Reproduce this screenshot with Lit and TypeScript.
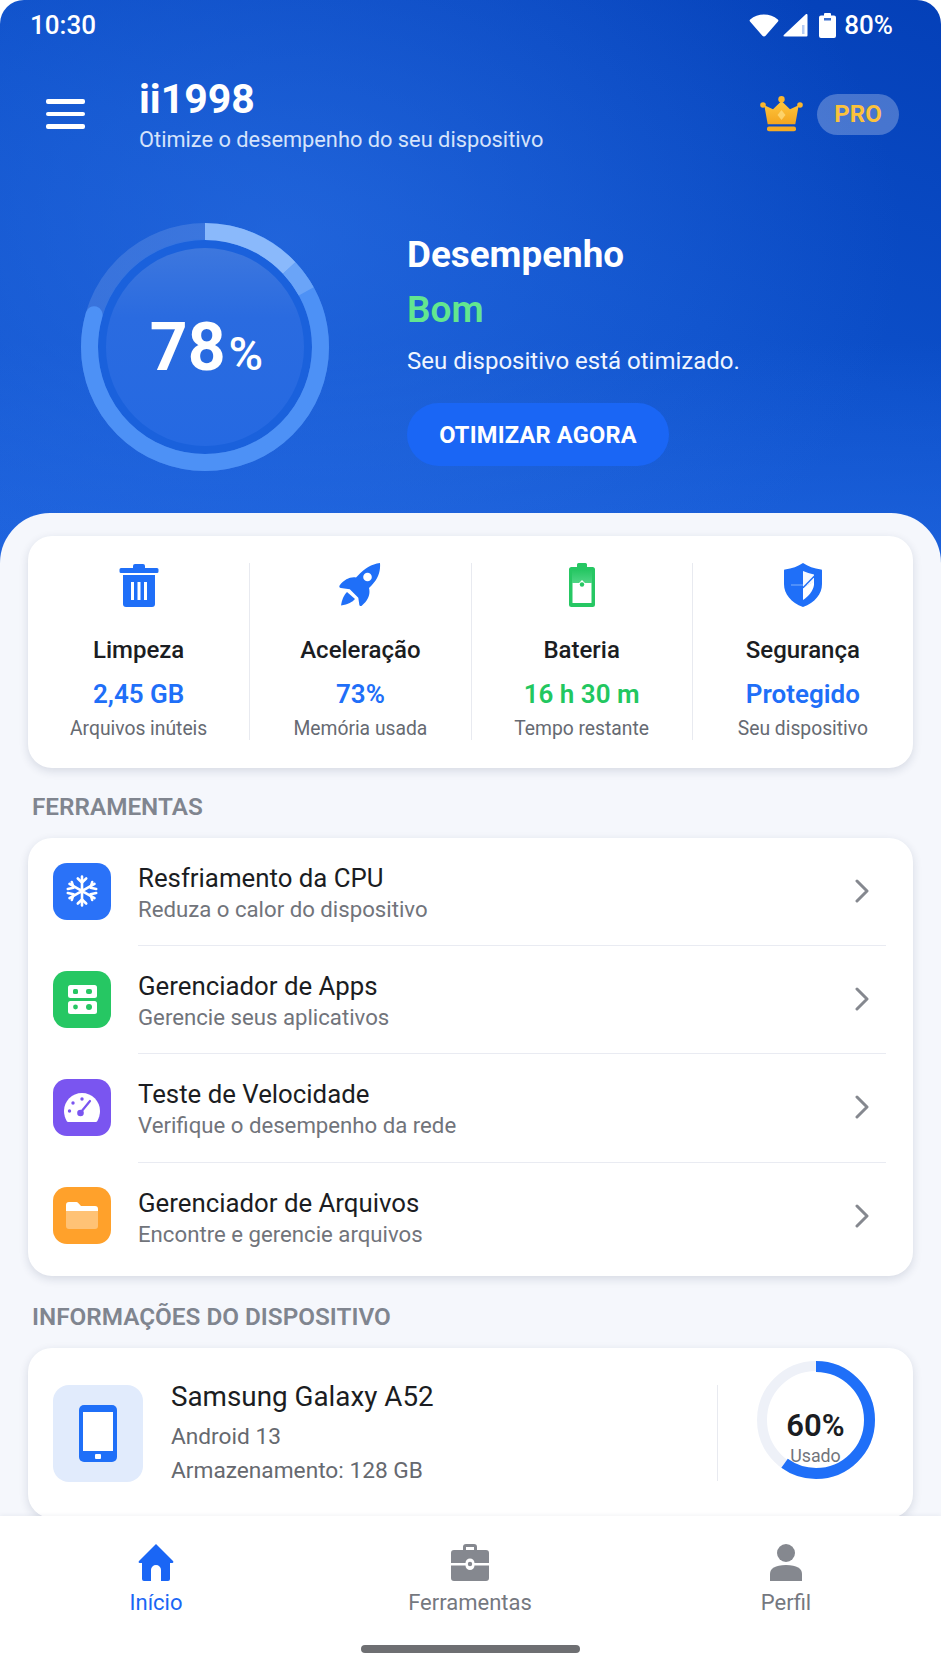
import { LitElement, css, html, svg } from "lit";
import { customElement } from "lit/decorators.js";

const stats = [
  { icon: "trash", label: "Limpeza", value: "2,45 GB", sub: "Arquivos inúteis", color: "blue" },
  { icon: "rocket", label: "Aceleração", value: "73%", sub: "Memória usada", color: "blue" },
  { icon: "battery", label: "Bateria", value: "16 h 30 m", sub: "Tempo restante", color: "green" },
  { icon: "shield", label: "Segurança", value: "Protegido", sub: "Seu dispositivo", color: "blue" },
];

const tools = [
  { icon: "snow", bg: "#2a72f8", title: "Resfriamento da CPU", sub: "Reduza o calor do dispositivo" },
  { icon: "apps", bg: "#26c763", title: "Gerenciador de Apps", sub: "Gerencie seus aplicativos" },
  { icon: "gauge", bg: "#7a55f0", title: "Teste de Velocidade", sub: "Verifique o desempenho da rede" },
  { icon: "folder", bg: "#ffa12b", title: "Gerenciador de Arquivos", sub: "Encontre e gerencie arquivos" },
];

const icons: Record<string, unknown> = {
  trash: html`<svg width="40" height="44" viewBox="0 0 40 44">
    <path fill="#1f6ff8" d="M14 3a2 2 0 0 1 2-2h8a2 2 0 0 1 2 2v2h12a1.500 1.500 0 0 1 1.500 1.500v2A1.500 1.500 0 0 1 38 10H2a1.500 1.500 0 0 1-1.500-1.500v-2A1.500 1.500 0 0 1 2 5h12z" />
    <path fill="#1f6ff8" d="M4 12h32v29a3 3 0 0 1-3 3H7a3 3 0 0 1-3-3z" />
    <path fill="#fff" d="M12 19h3v18h-3zM18.500 19h3v18h-3zM25 19h3v18h-3z" />
  </svg>`,
  rocket: html`<svg width="42" height="44" viewBox="0 0 42 44">
    <path fill="#1f6ff8" d="M41 0c.6 8-1.500 15.500-8.500 22.500l-2.500 2.500c1.500 6-.5 12-7 17.500-1 .9-2.500.6-2.700-.8l-1-7-8.500-8.500-9-1.200c-1.500-.2-1.900-1.700-1-2.800C5.500 16.500 11 13.600 17 14.500l2-2C25.500 5.500 32.500 1 41 0z" />
    <circle cx="28.500" cy="14" r="4.300" fill="#fff" />
    <path fill="#1f6ff8" d="M8 29l8 7c-2.500 3-7 5.500-14 6.500C3 36 5 32 8 29z" />
  </svg>`,
  battery: html`<svg width="26" height="44" viewBox="0 0 26 44">
    <defs><linearGradient id="bt" x1="0" y1="0" x2="0" y2="1"><stop offset="0" stop-color="#26c763" /><stop offset="1" stop-color="#4fd585" /></linearGradient></defs>
    <path fill="#26c763" d="M8 1.500a1.500 1.500 0 0 1 1.500-1.500h7A1.500 1.500 0 0 1 18 1.500V4h5.500A2.500 2.500 0 0 1 26 6.500v35a2.500 2.500 0 0 1-2.500 2.500h-21A2.500 2.500 0 0 1 0 41.500v-35A2.500 2.500 0 0 1 2.500 4H8z" />
    <path fill="url(#bt)" d="M3 7h20v13H3z" />
    <path fill="#fff" d="M3.500 20h6.500l3-3 3 3h6.500v20H3.500z" />
    <circle cx="13" cy="21.500" r="2.200" fill="#26c763" />
  </svg>`,
  shield: html`<svg width="38" height="44" viewBox="0 0 38 44">
    <path fill="#1f6ff8" d="M19 0c5 3.500 11 5.500 18 6.500.6 0 1 .5 1 1.100V21c0 10-7 18.500-19 23C7 39.500 0 31 0 21V7.600c0-.6.400-1.100 1-1.100C8 5.500 14 3.500 19 0z" />
    <path fill="#fff" d="M19 8c3.500 1.500 7 2.800 11 3.500v7.500L22 23l-3 1.500z" opacity=".96" />
    <path fill="#fff" d="M19 24.500l11-6V22c-1 6-5 11-11 15z" />
    <path fill="#1f6ff8" d="M30 12.500v2L19.500 25.300l-1.500-.6z" />
    <path stroke="#7fb0fb" stroke-width="1" d="M7 22h12" />
  </svg>`,
  snow: html`<svg width="32" height="32" viewBox="0 0 32 32" fill="none" stroke="#fff" stroke-width="2.600" stroke-linecap="round" stroke-linejoin="round">
    <path d="M16 1.500v29M3.500 8.800l25 14.400M3.500 23.200l25-14.400" />
    <path d="M11.800 3.500 16 7.500l4.200-4M11.800 28.500l4.200-4 4.200 4M1.800 14l5.700-1.300-1.700-5.600M30.200 18l-5.700 1.300 1.700 5.600M5.800 24.900l1.700-5.600-5.700-1.300M26.200 7.100l-1.700 5.600 5.700 1.300" />
  </svg>`,
  apps: html`<svg width="29" height="29" viewBox="0 0 29 29">
    <rect width="29" height="13" rx="2.500" fill="#fff" />
    <rect y="16" width="29" height="13" rx="2.500" fill="#fff" />
    <rect x="5" y="4" width="5" height="5" rx="1.500" fill="#26c763" />
    <rect x="18" y="4" width="6" height="5" rx="2" fill="#26c763" />
    <circle cx="7.500" cy="22" r="2.400" fill="#26c763" />
    <circle cx="21" cy="22" r="3" fill="#26c763" />
  </svg>`,
  gauge: html`<svg width="36" height="29" viewBox="0 0 36 29">
    <path fill="#fff" d="M18 0C8 0 0 8 0 18c0 3.500 1 7 2.800 10.200.3.500.8.800 1.300.800h27.800c.5 0 1-.3 1.300-.8C35 25 36 21.500 36 18 36 8 28 0 18 0z" />
    <g fill="#7a55f0"><circle cx="18" cy="6" r="1.700" /><circle cx="9" cy="10" r="1.700" /><circle cx="5.500" cy="18" r="1.700" /><circle cx="16.500" cy="20" r="3.300" /></g>
    <path stroke="#7a55f0" stroke-width="2.200" stroke-linecap="round" d="M17 19l9-11" />
  </svg>`,
  folder: html`<svg width="32" height="27" viewBox="0 0 32 27">
    <path fill="#fff" d="M0 3a3 3 0 0 1 3-3h7.500a2 2 0 0 1 1.500.7L15 4h14a3 3 0 0 1 3 3v2H0z" />
    <path fill="#fff" opacity=".35" d="M0 9h32v15a3 3 0 0 1-3 3H3a3 3 0 0 1-3-3z" />
  </svg>`,
};

function chevron() {
  return html`<svg width="16" height="24" viewBox="0 0 16 24" fill="none" stroke="#85888f" stroke-width="3" stroke-linecap="round" stroke-linejoin="round"><path d="M3 2l10 10-10 10" /></svg>`;
}

function mainRing() {
  const arc = (from: number, to: number, stroke: string, cap = "butt") =>
    svg`<circle cx="124" cy="124" r="115.500" fill="none" pathLength="100" stroke=${stroke} stroke-width="17" stroke-linecap=${cap}
      stroke-dasharray="${to - from} ${100 - (to - from)}" stroke-dashoffset=${-from} />`;
  return html`<svg width="248" height="248" viewBox="0 0 248 248" class="ring-svg">
    <defs><linearGradient id="inner" x1="0" y1="0" x2="0" y2="1"><stop offset="0" stop-color="#3d77de" /><stop offset=".35" stop-color="#2a6be0" /><stop offset="1" stop-color="#2569e2" /></linearGradient></defs>
    <circle cx="124" cy="124" r="108" fill="#1a61dc" />
    <circle cx="124" cy="124" r="99" fill="url(#inner)" />
    <g transform="rotate(-90 124 124)">
      ${arc(0, 100, "rgba(255,255,255,.13)")}
      ${arc(4, 79.500, "#4d91f6", "round")}
      ${arc(0, 13, "#8ab9fb")}
      ${arc(13, 17, "#6aa4f8")}
    </g>
  </svg>`;
}

@customElement("app-root")
export class AppRoot extends LitElement {
  static styles = css`
    :host {
      display: block;
      width: 941px;
      height: 1672px;
      background: #fff;
      font-family: Roboto, "Noto Sans", sans-serif;
      overflow: hidden;
    }
    .screen {
      height: 100%;
      display: flex;
      flex-direction: column;
    }
    .scroll {
      flex: 1;
      min-height: 0;
      overflow: hidden;
    }

    /* blue header */
    .header {
      height: 570px;
      box-sizing: border-box;
      border-radius: 24px 24px 0 0;
      color: #fff;
      background:
        radial-gradient(620px 460px at 30% 42%, rgba(48, 116, 232, 0.55), rgba(48, 116, 232, 0) 100%),
        linear-gradient(180deg, rgba(8, 66, 190, 0) 60%, rgba(34, 104, 226, 0.7) 100%),
        linear-gradient(200deg, #0440b8 0%, #0c4fc9 45%, #1559d4 100%);
    }
    .status {
      height: 50px;
      display: flex;
      align-items: center;
      padding: 0 48px 0 30px;
      font-size: 26px;
      font-weight: 500;
    }
    .status .time {
      flex: 1;
    }
    .status svg {
      margin-right: 4px;
    }
    .status .pct {
      margin-left: 8px;
    }
    .appbar {
      display: flex;
      align-items: center;
      margin-top: 26px;
      padding: 0 42px 0 46px;
      height: 76px;
    }
    .menu {
      width: 39px;
      display: flex;
      flex-direction: column;
      gap: 8px;
      margin-right: 54px;
    }
    .menu span {
      height: 4.500px;
      border-radius: 2px;
      background: #fff;
    }
    .who {
      flex: 1;
      padding-top: 2px;
    }
    .who h1 {
      margin: 0;
      font-size: 41px;
      line-height: 44px;
      font-weight: 700;
    }
    .who p {
      margin: 6px 0 0;
      font-size: 21.800px;
      line-height: 26px;
      color: #d5e3fb;
    }
    .pro {
      width: 82px;
      height: 41px;
      margin-left: 14px;
      border-radius: 21px;
      display: flex;
      align-items: center;
      justify-content: center;
      background: rgba(255, 255, 255, 0.26);
      color: #fbc23c;
      font-size: 24px;
      font-weight: 700;
    }
    .hero {
      display: flex;
      margin-top: 71px;
      padding-left: 81px;
    }
    .ring {
      display: grid;
      width: 248px;
      height: 248px;
      place-items: center;
    }
    .ring > * {
      grid-area: 1 / 1;
    }
    .ring-svg {
      display: block;
    }
    .big {
      font-size: 66px;
      font-weight: 700;
      line-height: 1;
      display: flex;
      align-items: baseline;
      padding: 2px 0 0 3px;
    }
    .big small {
      font-size: 47px;
      font-weight: 500;
      margin-left: 3px;
    }
    .perf {
      margin-left: 78px;
      padding-top: 9px;
    }
    .perf h2 {
      margin: 0;
      font-size: 36.800px;
      line-height: 46px;
      font-weight: 700;
    }
    .perf .state {
      margin-top: 9px;
      font-size: 37px;
      line-height: 46px;
      font-weight: 600;
      color: #63e68f;
    }
    .perf p {
      margin: 13px 0 0;
      font-size: 24px;
      line-height: 30px;
      color: #f0f5ff;
    }
    .cta {
      margin-top: 27px;
      width: 262px;
      height: 63px;
      border-radius: 32px;
      background: #1a66f5;
      display: flex;
      align-items: center;
      justify-content: center;
      font-size: 23.600px;
      font-weight: 700;
      letter-spacing: 0.2px;
    }

    /* sheet */
    .sheet {
      margin-top: -57px;
      height: 1003px;
      box-sizing: border-box;
      border-radius: 50px 50px 0 0;
      background: #f5f7fc;
      padding: 23px 28px 0;
    }
    .card {
      background: #fff;
      border-radius: 24px;
      box-shadow: 0 3px 10px rgba(30, 45, 80, 0.14);
    }
    .stats {
      display: grid;
      grid-template-columns: repeat(4, 1fr);
      height: 232px;
      box-sizing: border-box;
      padding-top: 27px;
    }
    .stat {
      height: 177px;
      display: flex;
      flex-direction: column;
      align-items: center;
      border-left: 1px solid #e8eaf0;
    }
    .stat:first-child {
      border-left: 0;
    }
    .stat .ico {
      height: 44px;
    }
    .stat .ico svg {
      display: block;
    }
    .stat .label {
      margin-top: 28px;
      font-size: 24px;
      line-height: 30px;
      font-weight: 500;
      color: #1b1d22;
    }
    .stat .value {
      margin-top: 14px;
      font-size: 26px;
      line-height: 30px;
      font-weight: 600;
    }
    .value.blue {
      color: #1f6ff8;
    }
    .value.green {
      color: #22c760;
    }
    .stat .sub {
      margin-top: 8px;
      font-size: 19.300px;
      line-height: 24px;
      color: #666a72;
    }
    .section {
      margin: 24px 0 16px 4px;
      height: 30px;
      font-size: 24.300px;
      line-height: 30px;
      font-weight: 600;
      color: #80858f;
    }
    .tools {
      height: 438px;
      margin-bottom: 26px;
    }
    .tool {
      height: 108.200px;
      display: flex;
      align-items: center;
      padding-left: 25px;
    }
    .tile {
      width: 58px;
      height: 57px;
      margin-bottom: 2px;
      border-radius: 14px;
      display: flex;
      align-items: center;
      justify-content: center;
      flex: none;
    }
    .tile svg,
    .tool > svg {
      display: block;
    }
    .tool-body {
      flex: 1;
      align-self: stretch;
      margin: 0 27px 0 27px;
      display: flex;
      align-items: center;
      border-bottom: 1px solid #e9ebf2;
    }
    .tool:last-child .tool-body {
      border-bottom: 0;
    }
    .tool-text {
      flex: 1;
      padding-top: 3px;
    }
    .tool-text b {
      display: block;
      font-size: 25.800px;
      line-height: 30px;
      font-weight: 400;
      color: #1b1d22;
    }
    .tool-text span {
      display: block;
      margin-top: 2px;
      font-size: 22.200px;
      line-height: 28px;
      color: #71747b;
    }
    .tool-body svg {
      margin: 0 16px 2px 0;
    }
    .device {
      display: flex;
      align-items: center;
      height: 170px;
      padding-left: 25px;
    }
    .phone {
      width: 90px;
      height: 97px;
      border-radius: 16px;
      background: #e1ebfc;
      display: flex;
      align-items: center;
      justify-content: center;
      flex: none;
    }
    .phone svg {
      display: block;
    }
    .dev-text {
      flex: 1;
      margin-left: 28px;
      padding-top: 2px;
    }
    .dev-text b {
      display: block;
      margin-bottom: 6px;
      font-size: 27.800px;
      line-height: 34px;
      font-weight: 400;
      color: #1b1d22;
    }
    .dev-text span {
      display: block;
      font-size: 22.700px;
      line-height: 34px;
      color: #66696f;
    }
    .used {
      width: 195px;
      height: 96px;
      border-left: 1px solid #e8eaf0;
      display: grid;
      grid-template-rows: 96px;
      place-items: center;
    }
    .used > * {
      grid-area: 1 / 1;
    }
    .used svg {
      margin-bottom: 26px;
    }
    .used-text {
      text-align: center;
      margin-top: 12px;
    }
    .used-text b {
      display: block;
      font-size: 31px;
      line-height: 32px;
      font-weight: 600;
      color: #1b1d22;
    }
    .used-text span {
      display: block;
      margin-top: 2px;
      font-size: 17.800px;
      line-height: 24px;
      color: #71747b;
    }

    /* bottom nav */
    .nav {
      position: relative;
      flex: none;
      height: 156px;
      box-sizing: border-box;
      background: #fff;
      box-shadow: 0 -1px 4px rgba(30, 45, 80, 0.06);
      display: grid;
      grid-template-columns: 312px 316px 316px;
      padding-top: 28px;
    }
    .tab {
      display: flex;
      flex-direction: column;
      align-items: center;
      color: #75787f;
      font-size: 22px;
      line-height: 28px;
    }
    .tab svg {
      display: block;
      height: 37px;
      margin-bottom: 8px;
    }
    .tab.on {
      color: #1a66f5;
    }
    .homebar {
      position: absolute;
      left: 361px;
      bottom: 19px;
      width: 219px;
      height: 8px;
      border-radius: 4px;
      background: #6e6f72;
    }
  `;

  render() {
    return html`<div class="screen">
      <div class="scroll">
        <div class="header">
          <div class="status">
            <span class="time">10:30</span>
            <svg width="30" height="23" viewBox="0 0 30 23"><path fill="#fff" d="M15 22.500c-.7 0-1.200-.3-1.600-.8L1 7.500c-.6-.7-.5-1.500.2-2C5 2.200 9.800.5 15 .5s10 1.700 13.800 5c.7.500.8 1.300.2 2L16.600 21.700c-.4.500-.9.800-1.600.8z" /></svg>
            <svg width="25" height="23" viewBox="0 0 25 23"><path fill="#fff" d="M24.500 1v20.500a1 1 0 0 1-1 1H1.500c-.9 0-1.300-1-.7-1.600L22.800.300c.6-.6 1.700-.2 1.700.7z" /><rect x="19" y="11" width="2.500" height="9" fill="#b7cdf3" /></svg>
            <svg width="17" height="25" viewBox="0 0 17 25" style="margin:0 0 0 7px"><path fill="#fff" d="M5 1a1 1 0 0 1 1-1h5a1 1 0 0 1 1 1v1.500h3a2 2 0 0 1 2 2V23a2 2 0 0 1-2 2H2a2 2 0 0 1-2-2V4.500a2 2 0 0 1 2-2h3z" /><rect x="5" y="5" width="7" height="2.500" fill="#3a6fd0" /></svg>
            <span class="pct">80%</span>
          </div>
          <div class="appbar">
            <div class="menu"><span></span><span></span><span></span></div>
            <div class="who">
              <h1>ii1998</h1>
              <p>Otimize o desempenho do seu dispositivo</p>
            </div>
            <svg width="43" height="36" viewBox="0 0 43 36">
              <defs><linearGradient id="cr" x1="0" y1="0" x2="0" y2="1"><stop offset="0" stop-color="#ffc83e" /><stop offset="1" stop-color="#f4a51f" /></linearGradient></defs>
              <path fill="url(#cr)" d="M21.500 5L30 13.300l8.700-4-3.400 19H7.700l-3.400-19 8.700 4z" />
              <circle cx="21.500" cy="3.200" r="3.200" fill="#fbb62d" /><circle cx="3" cy="9" r="2.800" fill="#fbb62d" /><circle cx="40" cy="9" r="2.800" fill="#fbb62d" />
              <path fill="#ffdf85" d="M21.500 14l4 5-4 5-4-5z" opacity=".7" />
              <rect x="7" y="30.500" width="29" height="4.800" rx="2" fill="#f6ab24" />
            </svg>
            <div class="pro">PRO</div>
          </div>
          <div class="hero">
            <div class="ring">
              ${mainRing()}
              <div class="big">78<small>%</small></div>
            </div>
            <div class="perf">
              <h2>Desempenho</h2>
              <div class="state">Bom</div>
              <p>Seu dispositivo está otimizado.</p>
              <div class="cta">OTIMIZAR AGORA</div>
            </div>
          </div>
        </div>

        <div class="sheet">
          <div class="card stats">
            ${stats.map(
              (s) => html`<div class="stat">
                <div class="ico">${icons[s.icon]}</div>
                <div class="label">${s.label}</div>
                <div class="value ${s.color}">${s.value}</div>
                <div class="sub">${s.sub}</div>
              </div>`,
            )}
          </div>

          <div class="section">FERRAMENTAS</div>
          <div class="card tools">
            ${tools.map(
              (t) => html`<div class="tool">
                <div class="tile" style="background:${t.bg}">${icons[t.icon]}</div>
                <div class="tool-body">
                  <div class="tool-text">
                    <b>${t.title}</b>
                    <span>${t.sub}</span>
                  </div>
                  ${chevron()}
                </div>
              </div>`,
            )}
          </div>

          <div class="section">INFORMAÇÕES DO DISPOSITIVO</div>
          <div class="card device">
            <div class="phone">
              <svg width="38" height="57" viewBox="0 0 38 57">
                <rect width="38" height="57" rx="5" fill="#1f6ff8" />
                <rect x="4" y="7" width="30" height="39" fill="#fff" />
                <rect x="16" y="49" width="6" height="5" rx="1" fill="#fff" />
              </svg>
            </div>
            <div class="dev-text">
              <b>Samsung Galaxy A52</b>
              <span>Android 13</span>
              <span>Armazenamento: 128 GB</span>
            </div>
            <div class="used">
              <svg width="118" height="118" viewBox="0 0 118 118">
                <circle cx="59" cy="59" r="54" fill="none" stroke="#eef1f8" stroke-width="10" />
                <circle cx="59" cy="59" r="53.500" fill="none" stroke="#1f6ff8" stroke-width="11" pathLength="100" stroke-dasharray="60 40" transform="rotate(-90 59 59)" />
              </svg>
              <div class="used-text"><b>60%</b><span>Usado</span></div>
            </div>
          </div>
        </div>
      </div>

      <div class="nav">
        <div class="tab on">
          <svg width="36" height="37" viewBox="0 0 36 37"><path fill="#1a66f5" d="M18 0L35 17c.8.800.4 2-.7 2H32v16a2 2 0 0 1-2 2h-7V26a5 5 0 0 0-10 0v11H6a2 2 0 0 1-2-2V19H1.700C.6 19 .2 17.800 1 17z" /></svg>
          <span>Início</span>
        </div>
        <div class="tab">
          <svg width="38" height="37" viewBox="0 0 38 37"><path fill="#85888f" d="M12 6V3a3 3 0 0 1 3-3h8a3 3 0 0 1 3 3v3h9a3 3 0 0 1 3 3v10H23.500a4.500 4.500 0 0 0-9 0H0V9a3 3 0 0 1 3-3zm3 0h8V3h-8z" /><path fill="#85888f" d="M0 21.500h14.500a4.500 4.500 0 0 0 9 0H38V34a3 3 0 0 1-3 3H3a3 3 0 0 1-3-3z" /><circle cx="19" cy="20" r="2.200" fill="#85888f" /></svg>
          <span>Ferramentas</span>
        </div>
        <div class="tab">
          <svg width="32" height="37" viewBox="0 0 32 37"><circle cx="16" cy="9" r="9" fill="#85888f" /><path fill="#85888f" d="M0 37v-7c0-5.500 5-9 16-9s16 3.500 16 9v7z" /></svg>
          <span>Perfil</span>
        </div>
        <div class="homebar"></div>
      </div>
    </div>`;
  }
}
